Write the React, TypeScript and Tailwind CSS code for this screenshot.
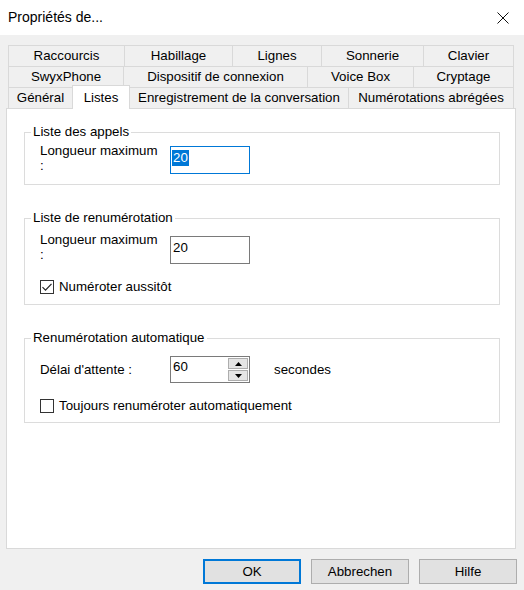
import type { ReactNode } from 'react'

const rowOne = [
  { label: 'Raccourcis', w: 'w-[117px]' },
  { label: 'Habillage', w: 'w-[109px]' },
  { label: 'Lignes', w: 'w-[90px]' },
  { label: 'Sonnerie', w: 'w-[103px]' },
  { label: 'Clavier', w: 'w-[91px]' },
]

const rowTwo = [
  { label: 'SwyxPhone', w: 'w-[116px]' },
  { label: 'Dispositif de connexion', w: 'w-[185px]' },
  { label: 'Voice Box', w: 'w-[107px]' },
  { label: 'Cryptage', w: 'w-[101px]' },
]

const Tab = ({ label, w }: { label: string; w: string }) => (
  <div className={`${w} h-[22px] border border-[#d9d9d9] not-first:-ml-px flex items-center justify-center`}>
    {label}
  </div>
)

const GroupBox = ({ title, className, children }: { title: string; className: string; children: ReactNode }) => (
  <fieldset className={`border border-[#dcdcdc] w-full ${className}`}>
    <legend className="ml-[6px] px-[2px] leading-4">{title}</legend>
    {children}
  </fieldset>
)

const CheckBox = ({ checked, label }: { checked: boolean; label: string }) => (
  <div className="flex items-center h-4 pl-[15px]">
    <span className="w-[14px] h-[14px] border border-[#333] bg-white flex items-center justify-center">
      {checked && (
        <svg width="12" height="12" viewBox="0 0 12 12">
          <path d="M1.5 6.2 L4.5 9.2 L10.5 2.8" fill="none" stroke="#222" strokeWidth="1.2" />
        </svg>
      )}
    </span>
    <span className="ml-[5px] leading-4">{label}</span>
  </div>
)

const Arrow = ({ up }: { up: boolean }) => (
  <svg width="7" height="4" viewBox="0 0 7 4">
    <path d={up ? 'M0 4 L3.5 0 L7 4 Z' : 'M0 0 L3.5 4 L7 0 Z'} fill="#000" />
  </svg>
)

export default function App() {
  return (
    <div className="w-[524px] h-[590px] bg-[#f0f0f0] text-black text-[13.3px] font-['Liberation_Sans',Arial,sans-serif] overflow-hidden flex flex-col">
      {/* title bar */}
      <div className="h-[35px] bg-white flex items-center justify-between pl-[8px] pr-[15px] shrink-0">
        <span className="text-[14px]">Propriétés de...</span>
        <svg width="12" height="12" viewBox="0 0 12 12">
          <path d="M0.5 0.5 L11.5 11.5 M11.5 0.5 L0.5 11.5" stroke="#111" strokeWidth="1" />
        </svg>
      </div>

      <div className="px-[6px] mt-[10px]">
        {/* tab strip */}
        <div className="ml-[2px] flex flex-col">
          <div className="flex">
            {rowOne.map((t) => (
              <Tab key={t.label} {...t} />
            ))}
          </div>
          <div className="flex -mt-px">
            {rowTwo.map((t) => (
              <Tab key={t.label} {...t} />
            ))}
          </div>
          <div className="flex items-end h-[23px] -mt-[3px]">
            <div className="w-[65px] h-[21px] border-l border-t border-r border-[#d9d9d9] flex items-center justify-center">
              Général
            </div>
            <div className="w-[58px] h-[24px] -ml-px -mb-px relative z-10 bg-white border-l border-t border-r border-[#d9d9d9] flex items-center justify-center">
              Listes
            </div>
            <div className="w-[220px] h-[21px] -ml-px border-l border-t border-r border-[#d9d9d9] flex items-center justify-center">
              Enregistrement de la conversation
            </div>
            <div className="w-[166px] h-[21px] -ml-px border-l border-t border-r border-[#d9d9d9] flex items-center justify-center">
              Numérotations abrégées
            </div>
          </div>
        </div>

        {/* page body */}
        <div className="w-[510px] h-[441px] bg-white border border-[#d9d9d9] pt-[15px] pl-[17px] pr-[15px] flex flex-col">
          <GroupBox title="Liste des appels" className="pb-[10px]">
            <div className="flex items-start pl-[15px] pt-[3px]">
              <span className="w-[130px] leading-[15px] pr-[10px]">Longueur maximum :</span>
              <div className="w-[80px] h-[28px] mt-[3px] border border-[#0078d7] bg-white pl-px pt-px">
                <span className="bg-[#0078d7] text-white px-px leading-4 inline-block">20</span>
              </div>
            </div>
          </GroupBox>

          <GroupBox title="Liste de renumérotation" className="mt-[25px] pb-[9px]">
            <div className="flex items-start pl-[15px] pt-[6px]">
              <span className="w-[130px] leading-[15px] pr-[10px]">Longueur maximum :</span>
              <div className="w-[80px] h-[28px] mt-[4px] border border-[#7a7a7a] bg-white pl-[2px] pt-px">
                <span className="leading-4 inline-block">20</span>
              </div>
            </div>
            <div className="mt-[15px]">
              <CheckBox checked label="Numéroter aussitôt" />
            </div>
          </GroupBox>

          <GroupBox title="Renumérotation automatique" className="mt-[25px] pb-[8px]">
            <div className="flex items-center pl-[15px] pt-[10px]">
              <span className="w-[130px] leading-4">Délai d'attente :</span>
              <div className="w-[80px] h-[27px] border border-[#7a7a7a] bg-white flex">
                <span className="flex-1 pl-[2px] pt-[2px] leading-4">60</span>
                <div className="w-[21px] flex flex-col gap-px pr-px py-[1px]">
                  <div className="h-[12px] border border-[#adadad] bg-[#e5e5e5] flex items-center justify-center">
                    <Arrow up />
                  </div>
                  <div className="h-[12px] border border-[#adadad] bg-[#e5e5e5] flex items-center justify-center">
                    <Arrow up={false} />
                  </div>
                </div>
              </div>
              <span className="ml-[24px] leading-4">secondes</span>
            </div>
            <div className="mt-[15px]">
              <CheckBox checked={false} label="Toujours renuméroter automatiquement" />
            </div>
          </GroupBox>
        </div>
      </div>

      {/* dialog buttons */}
      <div className="flex justify-end gap-[10px] pr-[7px] mt-[10px]">
        <button className="w-[98px] h-[25px] border-2 border-[#0078d7] bg-[#e1e1e1]">OK</button>
        <button className="w-[98px] h-[25px] border border-[#adadad] bg-[#e1e1e1]">Abbrechen</button>
        <button className="w-[98px] h-[25px] border border-[#adadad] bg-[#e1e1e1]">Hilfe</button>
      </div>
    </div>
  )
}
